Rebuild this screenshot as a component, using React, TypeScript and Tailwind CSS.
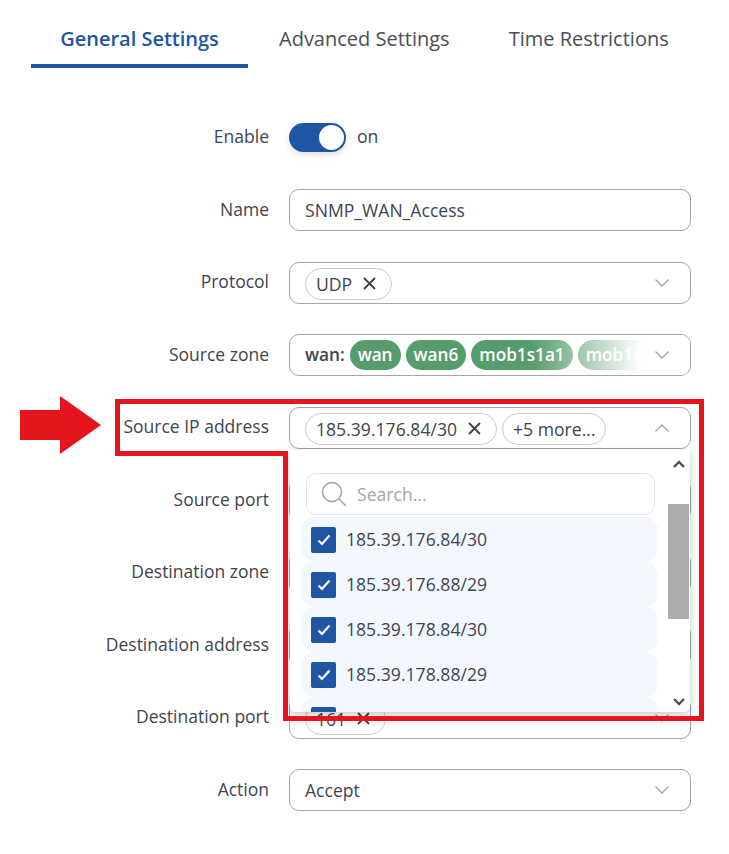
import React from "react";

const label = "w-[269px] shrink-0 text-right text-[17.5px] leading-[24px] text-[#3f4450] mb-[3px]";
const box = "w-[402px] h-[42px] ml-5 border border-[#a3a5ad] rounded-[10px] bg-white flex items-center relative";

function Chevron({ up = false }: { up?: boolean }) {
  return (
    <svg width="14" height="8" viewBox="0 0 14 8" fill="none" className="absolute left-[365px] top-[16px]">
      <path d={up ? "M.5 7.5 7 1l6.5 6.5" : "M.5.5 7 7 13.5.5"} stroke="#a3a5ad" strokeWidth="1.4" />
    </svg>
  );
}

function X() {
  return (
    <svg width="13" height="13" viewBox="0 0 13 13" fill="none" className="shrink-0">
      <path d="M1 1l11 11M12 1 1 12" stroke="#3f4450" strokeWidth="1.9" />
    </svg>
  );
}

function Row({ name, children }: { name: string; children: React.ReactNode }) {
  return (
    <div className="flex items-center h-[42px]">
      <div className={label}>{name}</div>
      {children}
    </div>
  );
}

function Chip({ children, close = false }: { children: React.ReactNode; close?: boolean }) {
  return (
    <span className={"h-[32px] mt-[2px] rounded-full border border-[#c9cbd1] flex items-center pl-[10px] gap-[11px] text-[17.6px] text-[#3f4450] whitespace-nowrap " + (close ? "pr-[15px]" : "pr-[9px]")}>
      {children}
      {close && <X />}
    </span>
  );
}

function Green({ children }: { children: React.ReactNode }) {
  return (
    <span className="h-[30px] rounded-full bg-[#579c6c] px-2 flex items-center text-[17.2px] font-semibold text-white whitespace-nowrap">
      {children}
    </span>
  );
}

function Item({ ip }: { ip: string }) {
  return (
    <div className="h-[45px] shrink-0 rounded-[14px] bg-[#f3f8ff] flex items-center pl-[10px] gap-[10px] text-[17.6px] text-[#3f4450]">
      <span className="w-[25px] h-[26px] rounded-[2px] bg-[#1e55a5] flex items-center justify-center shrink-0">
        <svg width="14" height="12" viewBox="0 0 14 12" fill="none">
          <path d="M1.5 6.5 5 10l7.5-8.5" stroke="#fff" strokeWidth="2.2" />
        </svg>
      </span>
      {ip}
    </div>
  );
}

export default function App() {
  return (
    <div className="relative w-[729px] h-[854px] bg-white overflow-hidden font-['Open_Sans',sans-serif]">
      <div className="flex pl-[31px] h-[68px] text-[20px] leading-[27px]">
        <div className="w-[217px] border-b-[4px] border-[#1e55a5] pt-[25px] text-center font-semibold text-[#1e55a5]">
          General Settings
        </div>
        <div className="pt-[25px] pl-[31px] text-[#4a4d55]">Advanced Settings</div>
        <div className="pt-[25px] pl-[59px] text-[#4a4d55]">Time Restrictions</div>
      </div>

      <div className="flex flex-col gap-[30.5px] pt-[48.75px]">
        <Row name="Enable">
          <div className="ml-5 flex items-center gap-[11px]">
            <div className="w-[57px] h-[29px] rounded-full bg-[#1e55a5] shadow-[0_3px_6px_rgba(0,0,0,0.12)] relative mb-[1px]">
              <div className="absolute right-[2px] top-[2px] w-[25px] h-[25px] rounded-full bg-white" />
            </div>
            <span className="text-[17.6px] text-[#3f4450] mb-[3px]">on</span>
          </div>
        </Row>
        <Row name="Name">
          <div className={box + " pl-[15px] text-[17.6px] text-[#3f4450]"}>SNMP_WAN_Access</div>
        </Row>
        <Row name="Protocol">
          <div className={box + " pl-[15px]"}>
            <Chip close>UDP</Chip>
            <Chevron />
          </div>
        </Row>
        <Row name="Source zone">
          <div className={box + " pl-[15px] gap-[5px] overflow-hidden"}>
            <span className="text-[17.2px] font-semibold text-[#3f4450]">wan:</span>
            <Green>wan</Green>
            <Green>wan6</Green>
            <Green>mob1s1a1</Green>
            <Green>mob1s1a2</Green>
            <div className="absolute left-[241px] top-0 bottom-0 right-0 bg-[linear-gradient(to_right,rgba(255,255,255,0),#fff_110px)]" />
            <Chevron />
          </div>
        </Row>
        <Row name="Source IP address">
          <div className={box + " pl-[15px] gap-[5px]"}>
            <Chip close>185.39.176.84/30</Chip>
            <Chip>+5 more...</Chip>
            <Chevron up />
          </div>
        </Row>
        <Row name="Source port"><div className={box} /></Row>
        <Row name="Destination zone"><div className={box} /></Row>
        <Row name="Destination address"><div className={box} /></Row>
        <Row name="Destination port">
          <div className={box + " pl-[15px]"}>
            <Chip close>161</Chip>
            <Chevron />
          </div>
        </Row>
        <Row name="Action">
          <div className={box + " pl-[15px] text-[17.6px] text-[#3f4450]"}>
            Accept
            <Chevron />
          </div>
        </Row>
      </div>

      {/* open dropdown */}
      <div className="absolute left-[290px] top-[450px] w-[400px] h-[262px] bg-white rounded-b-[6px] shadow-[0_3px_8px_rgba(0,0,0,0.22)] overflow-hidden flex">
        <div className="w-[378px] pl-[11px] pr-[10px] pt-[23px] flex flex-col">
          <div className="h-[42px] mx-[5px] shrink-0 w-[349px] rounded-[10px] border border-[#dfe4ee] flex items-center pl-[14px] gap-[10px] text-[17.6px] text-[#a3a5ad] mb-[2px]">
            <svg width="26" height="26" viewBox="0 0 26 26" fill="none" className="shrink-0">
              <circle cx="11" cy="11" r="9.5" stroke="#a3a5ad" strokeWidth="1.6" />
              <path d="M18 18l7 7" stroke="#a3a5ad" strokeWidth="1.6" />
            </svg>
            Search...
          </div>
          <Item ip="185.39.176.84/30" />
          <Item ip="185.39.176.88/29" />
          <Item ip="185.39.178.84/30" />
          <Item ip="185.39.178.88/29" />
          <Item ip="185.39.178.92/29" />
        </div>
        <div className="w-[21px] relative">
          <div className="absolute left-0 right-0 top-[54px] h-[115px] bg-[#adadad]" />
          <svg width="12" height="8" viewBox="0 0 12 8" fill="none" className="absolute left-[5px] top-[10px]">
            <path d="M1 7l5-5 5 5" stroke="#505050" strokeWidth="2.4" />
          </svg>
          <svg width="12" height="8" viewBox="0 0 12 8" fill="none" className="absolute left-[5px] top-[248px]">
            <path d="M1 1l5 5 5-5" stroke="#505050" strokeWidth="2.4" />
          </svg>
        </div>
      </div>

      {/* annotation */}
      <svg width="729" height="854" viewBox="0 0 729 854" fill="none" className="absolute left-0 top-0 pointer-events-none">
        <path d="M117.5 401.5H701.5V718.5H285.5V453.5H117.5Z" stroke="#e5151d" strokeWidth="5" />
        <path d="M20 410H60V396L101 425 60 454V440H20Z" fill="#e5151d" />
      </svg>
    </div>
  );
}
